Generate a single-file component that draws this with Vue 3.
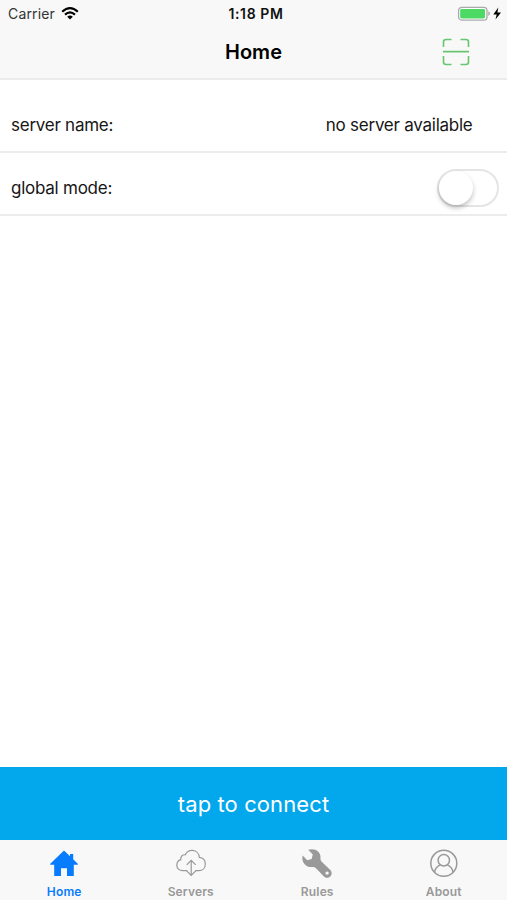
<script setup>
import { ref } from 'vue'

const tabs = ['Home', 'Servers', 'Rules', 'About']
const activeTab = ref('Home')
const serverName = ref('no server available')
const globalMode = ref(false)
</script>

<template>
    <div class="screen">
        <header class="topBar">
            <div class="statusBar">
                <div class="carrier">
                    <span>Carrier</span>
                    <svg class="wifi" width="18" height="14" viewBox="0 0 18 14">
                        <g fill="none" stroke="#000" stroke-width="2.2">
                            <path d="M1.2 4.7Q9-2.3 16.8 4.7" />
                            <path d="M4 7.6Q9 3.2 14 7.6" />
                        </g>
                        <path d="M6.2 9.7Q9 7.5 11.8 9.7L9 12.5Z" />
                    </svg>
                </div>
                <span class="clock">1:18 PM</span>
                <svg class="battery" width="45" height="16" viewBox="0 0 45 16">
                    <rect x="1.6" y="1.3" width="28.4" height="12.8" rx="3.2" fill="#fff" stroke="#a9a9ab" stroke-width="1.3" />
                    <rect x="3.2" y="2.9" width="24.8" height="9.6" rx="1.4" fill="#4cd964" />
                    <path d="M31.3 5.3Q33 5.8 33 7.6T31.3 9.9Z" fill="#a9a9ab" />
                    <path d="M41.3 1.4L36.3 8.4H39.7L38.5 13.6L44 6.6H40.4Z" />
                </svg>
            </div>
            <div class="navBar">
                <h1 class="title">Home</h1>
                <svg class="scan" width="28" height="28" viewBox="0 0 28 28" fill="none" stroke="#68c56e" stroke-width="1.6">
                    <path d="M1.5 9V4Q1.5 1.5 4 1.5H9.5M18.5 1.5H24Q26.5 1.5 26.5 4V9M26.5 18V24Q26.5 26.5 24 26.5H18.5M9.5 26.5H4Q1.5 26.5 1.5 24V18M1 13.6H27" />
                </svg>
            </div>
        </header>

        <main class="content">
            <div class="row serverRow">
                <span class="serverLabel">server name:</span>
                <span class="serverValue">{{ serverName }}</span>
            </div>
            <div class="row modeRow">
                <span class="modeLabel">global mode:</span>
                <button class="switch" :class="{ on: globalMode }" @click="globalMode = !globalMode">
                    <span class="knob"></span>
                </button>
            </div>
        </main>

        <button class="connect"><span>tap to connect</span></button>

        <nav class="tabBar">
            <button v-for="tab in tabs" :key="tab" class="tab" :class="{ active: tab === activeTab }" @click="activeTab = tab">
                <svg v-if="tab === 'Home'" width="30" height="30" viewBox="0 0 30 30">
                    <path d="M15 1.4L1 14.9Q.9 15.7 1.8 15.7H5.2V27H12V19.2H18V27H24.8V15.7H28.2Q29.1 15.7 29 14.9L24.2 10.2V5H21V7.2Z" fill="currentColor" />
                </svg>
                <svg v-else-if="tab === 'Servers'" width="30" height="30" viewBox="0 0 30 30" fill="none" stroke="currentColor" stroke-width="1.2">
                    <path d="M11.3 21.7H6.7C3.2 21.7.8 19.3.8 16.2C.8 13.5 2.4 11.4 4.8 10.7C4.3 7.7 6.4 5.5 9.2 5.8C10.8 2.7 13.4 1.2 16.5 1.4C20.4 1.7 23.1 4.6 23.3 8.3C26.9 8.7 29.3 11.4 29.3 14.9C29.3 18.8 26.7 21.7 22.8 21.7H19.2" />
                    <path d="M15.2 11.4V26.2M10.7 15.8L15.2 11.3L19.7 15.8M10.7 21.8L15.2 26.3L19.7 21.8" />
                </svg>
                <svg v-else-if="tab === 'Rules'" width="30" height="30" viewBox="0 0 30 30">
                    <path fill-rule="evenodd" d="M6.2.7C13.4-1.4 19 3.1 18.5 8.8Q18.2 11.2 19.5 12.4L28.3 21.1C30.1 22.9 30.1 25.7 28.3 27.5C26.5 29.3 23.7 29.3 21.9 27.5L14 19.3Q12.5 17.8 10.3 18C4.2 18.5-.8 13.8.6 6.6L5.3 11.2L9.6 10.1L10.8 5.4ZM25.1 22.4A1.7 1.7 0 1 0 25.1 25.8A1.7 1.7 0 1 0 25.1 22.4Z" fill="currentColor" />
                </svg>
                <svg v-else width="30" height="30" viewBox="0 0 30 30" fill="none" stroke="currentColor" stroke-width="1.5">
                    <circle cx="14.8" cy="14.3" r="13" />
                    <circle cx="14.8" cy="11.3" r="5.7" />
                    <path d="M5.6 23.2Q6.2 18.3 11.2 15.9M18.4 15.9Q23.4 18.3 24 23.2" />
                </svg>
                <span class="tabText">{{ tab }}</span>
            </button>
        </nav>
    </div>
</template>

<style>
body {
    margin: 0;
    background: #fff;
}
</style>

<style scoped>
.screen {
    display: flex;
    flex-direction: column;
    height: 100vh;
    overflow: hidden;
    font-family: Inter, "Liberation Sans", sans-serif;
    color: #161616;
}
button {
    border: none;
    padding: 0;
    font-family: inherit;
    cursor: pointer;
}
svg {
    display: block;
    flex: none;
}
/* Status and navigation bars */
.topBar {
    box-sizing: border-box;
    height: 80px;
    background: #f8f8f8;
    border-bottom: 2px solid #ebebeb;
}
.statusBar {
    display: grid;
    grid-template-columns: 1fr auto 1fr;
    align-items: center;
    height: 27px;
    padding: 0 5px 0 8px;
    font-size: 14px;
}
.carrier {
    display: flex;
    align-items: center;
    gap: 6px;
    letter-spacing: .15px;
    color: #333;
}
.clock {
    font-weight: 600;
    letter-spacing: .6px;
    padding-left: 2px;
    color: #111;
}
.battery {
    justify-self: end;
}
.navBar {
    display: grid;
    grid-template-columns: 1fr auto 1fr;
    align-items: center;
    height: 50px;
}
.title {
    grid-column: 2;
    margin: 0;
    font-size: 20px;
    font-weight: 600;
    color: #000;
}
.scan {
    justify-self: end;
    margin-right: 37px;
}
/* Settings rows */
.content {
    flex: 1;
}
.row {
    box-sizing: border-box;
    display: flex;
    align-items: center;
    justify-content: space-between;
    font-size: 17px;
    letter-spacing: -.25px;
    border-bottom: 2px solid #ececec;
}
.serverRow {
    height: 73px;
    padding: 19px 34.5px 0 11px;
}
.modeRow {
    height: 63px;
    padding: 9px 8px 0 11px;
}
.switch {
    box-sizing: border-box;
    width: 62px;
    height: 38px;
    border: 2px solid #e5e5e5;
    border-radius: 19px;
    background: #fff;
}
.knob {
    display: block;
    width: 34px;
    height: 34px;
    border-radius: 50%;
    background: #fff;
    box-shadow: 0 3px 5px rgba(0, 0, 0, .24);
}
.switch.on {
    background: #4cd964;
}
.switch.on .knob {
    margin-left: auto;
}
/* Connect button */
.connect {
    height: 73px;
    background: #02a7ec;
    color: #fff;
    font-size: 22px;
    letter-spacing: .1px;
}
/* Bottom tabs */
.tabBar {
    display: flex;
    height: 60px;
    padding-left: 1px;
    background: #f8f8f8;
}
.tab {
    display: flex;
    flex: 1;
    flex-direction: column;
    align-items: center;
    padding-top: 9px;
    background: none;
    color: #999;
}
.tab.active {
    color: #087cff;
}
.tabText {
    margin-top: 5px;
    font-size: 12px;
    font-weight: 600;
    line-height: 15px;
    letter-spacing: .15px;
}
</style>
